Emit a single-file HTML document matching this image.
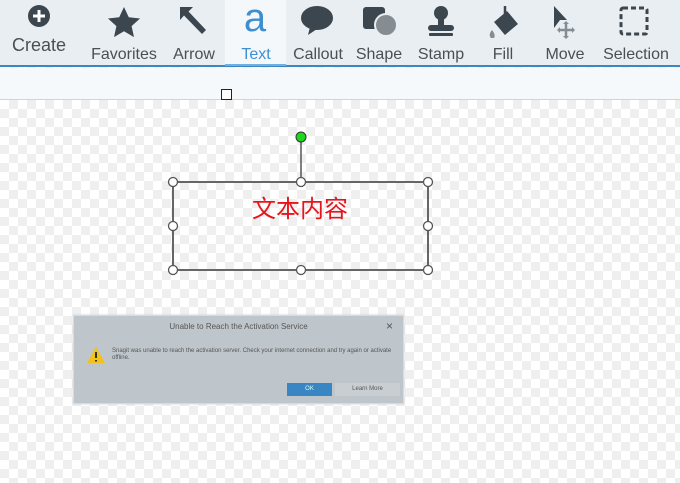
<!DOCTYPE html>
<html><head><meta charset="utf-8"><style>
*{margin:0;padding:0;box-sizing:border-box}
body{width:680px;height:483px;overflow:hidden;font-family:"Liberation Sans",sans-serif;position:relative;
background-color:#fff;background-image:linear-gradient(45deg,#efefef 25%,transparent 25%,transparent 75%,#efefef 75%),linear-gradient(45deg,#efefef 25%,transparent 25%,transparent 75%,#efefef 75%);background-size:18px 18px;background-position:0 100px,9px 109px}
.tb{position:absolute;left:0;top:0;width:680px;height:67px;background:#e9eef2;border-bottom:2px solid #3d86c2}
.band{position:absolute;left:0;top:68px;width:680px;height:32px;background:#f6f9fc;border-bottom:1px solid #d0d4d8}
.t{position:absolute;font-size:16px;color:#4a4f54;text-align:center}
.ic{position:absolute}
</style></head><body>
<div class="tb"></div>
<div style="position:absolute;left:225px;top:0;width:61px;height:66px;background:#f5f8fb;border-bottom:2px solid #6fb0e3"></div>
<div class="band"></div>
<div style="position:absolute;left:221px;top:89px;width:11px;height:11px;border:1.5px solid #222;background:#fff"></div>

<svg class="ic" style="left:27px;top:4px" width="24" height="24"><circle cx="12" cy="12" r="11" fill="#3c464e"/><path d="M12 6v12M6 12h12" stroke="#fff" stroke-width="3"/></svg>
<div class="t" style="left:5px;top:35px;width:68px;font-size:18px">Create</div>
<svg class="ic" style="left:107px;top:6px" width="34" height="32"><path d="M17 1l4.8 10.3 11.2 1.2-8.4 7.6 2.4 11-10-5.8-10 5.8 2.4-11L1 12.5l11.2-1.2z" fill="#3c464e"/></svg>
<div class="t" style="left:88px;top:46px;width:72px">Favorites</div>
<svg class="ic" style="left:177px;top:5px" width="34" height="32"><path d="M3 2h13l-4.5 4.5L29 25l-4 4L7 10.5 3 15z" fill="#3c464e"/></svg>
<div class="t" style="left:168px;top:46px;width:52px">Arrow</div>
<div class="t" style="left:235px;top:-4px;width:40px;font-size:40px;color:#3d8fd0">a</div>
<div class="t" style="left:230px;top:46px;width:52px;color:#3d8fd0">Text</div>
<svg class="ic" style="left:300px;top:5px" width="34" height="32"><ellipse cx="17" cy="13" rx="16" ry="12" fill="#3c464e"/><path d="M10 22l-2 8 9-6z" fill="#3c464e"/></svg>
<div class="t" style="left:290px;top:46px;width:56px">Callout</div>
<svg class="ic" style="left:362px;top:6px" width="36" height="30"><rect x="1" y="1" width="22" height="22" rx="3" fill="#3c464e"/><circle cx="24" cy="19" r="11" fill="#858d93" stroke="#e9eef2" stroke-width="2"/></svg>
<div class="t" style="left:354px;top:46px;width:50px">Shape</div>
<svg class="ic" style="left:425px;top:4px" width="32" height="34"><circle cx="16" cy="9" r="7" fill="#3c464e"/><rect x="13" y="12" width="6" height="10" fill="#3c464e"/><rect x="3" y="21" width="26" height="6" rx="3" fill="#3c464e"/><rect x="4" y="29" width="24" height="3" rx="1" fill="#3c464e"/></svg>
<div class="t" style="left:413px;top:46px;width:56px">Stamp</div>
<svg class="ic" style="left:486px;top:4px" width="36" height="34"><path d="M8 19l12-12 12 12-12 12z" fill="#3c464e" transform="rotate(5 20 19)"/><path d="M19 2v14" stroke="#3c464e" stroke-width="2.5"/><path d="M6 26q-4 5-1 8h3q2-3-2-8z" fill="#858d93"/></svg>
<div class="t" style="left:485px;top:46px;width:36px">Fill</div>
<svg class="ic" style="left:550px;top:4px" width="30" height="36"><path d="M4 2l13 14h-7l-6 8z" fill="#3c464e"/><path d="M16 19v14M9 26h14" stroke="#858d93" stroke-width="2.5"/><path d="M16 17l-3 3h6zM16 35l-3-3h6zM7 26l3-3v6zM25 26l-3-3v6z" fill="#858d93"/></svg>
<div class="t" style="left:540px;top:46px;width:50px">Move</div>
<svg class="ic" style="left:619px;top:6px" width="30" height="30"><rect x="2" y="2" width="26" height="26" rx="2" fill="none" stroke="#3c464e" stroke-width="3" stroke-dasharray="5 3"/></svg>
<div class="t" style="left:596px;top:46px;width:80px">Selection</div>

<svg class="ic" style="left:0;top:0" width="680" height="483">
<line x1="301" y1="137" x2="301" y2="182" stroke="#555" stroke-width="1.5"/>
<circle cx="301" cy="137" r="5" fill="#1bd81b" stroke="#333"/>
<rect x="173" y="182" width="255" height="88" fill="none" stroke="#666" stroke-width="2"/>
<g fill="#fff" stroke="#555" stroke-width="1.3">
<circle cx="173" cy="182" r="4.5"/><circle cx="301" cy="182" r="4.5"/><circle cx="428" cy="182" r="4.5"/>
<circle cx="173" cy="226" r="4.5"/><circle cx="428" cy="226" r="4.5"/>
<circle cx="173" cy="270" r="4.5"/><circle cx="301" cy="270" r="4.5"/><circle cx="428" cy="270" r="4.5"/></g>
</svg>
<div style="position:absolute;left:252px;top:189px;font-size:24px;color:#e8141c;font-family:'Liberation Sans','Noto Sans CJK SC',sans-serif">文本内容</div>

<div style="position:absolute;left:73px;top:315px;width:331px;height:89px;background:#bfc6cb;border:1px solid #d6dbdf;box-shadow:0 0 2px #ccc">
<div style="position:absolute;left:0;top:6px;width:100%;text-align:center;font-size:8px;color:#555">Unable to Reach the Activation Service</div>
<div style="position:absolute;right:10px;top:3px;font-size:12px;color:#555">×</div>
<svg style="position:absolute;left:12px;top:30px" width="20" height="18"><path d="M10 1l9 16H1z" fill="#f1c21b"/><path d="M10 6v6M10 14v1.5" stroke="#222" stroke-width="1.8"/></svg>
<div style="position:absolute;left:38px;top:32px;width:285px;font-size:6px;line-height:7px;color:#555">Snagit was unable to reach the activation server. Check your internet connection and try again or activate offline.</div>
<div style="position:absolute;left:213px;top:67px;width:45px;height:13px;background:#3a86c4;color:#dfe;font-size:6px;text-align:center;line-height:13px">OK</div>
<div style="position:absolute;left:261px;top:67px;width:65px;height:13px;background:#c8ced2;color:#555;font-size:6px;text-align:center;line-height:13px">Learn More</div>
</div>
</body></html>
